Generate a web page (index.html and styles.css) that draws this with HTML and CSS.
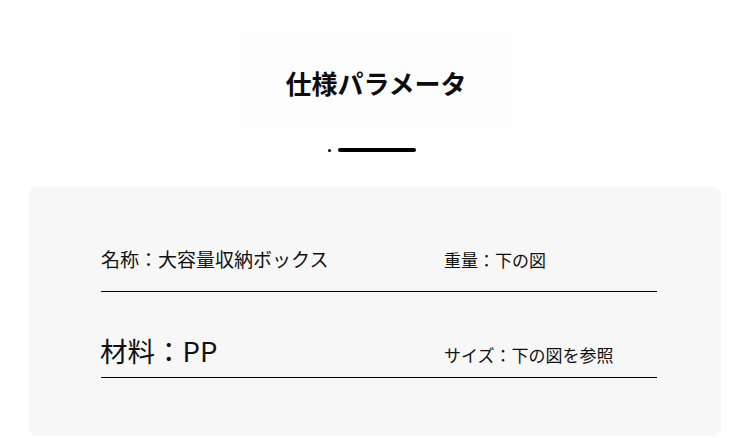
FILE: index.html
```html
<!DOCTYPE html>
<html lang="ja">
<head>
<meta charset="utf-8">
<link rel="stylesheet" href="styles.css">
</head>
<body>
<div class="page">
  <div class="title-box"><h1 class="title">仕様パラメータ</h1></div>
  <div class="divider"><span class="dot"></span><span class="bar"></span></div>
  <div class="card">
    <div class="row row-1">
      <div class="cell cell-left">名称：大容量収納ボックス</div>
      <div class="cell cell-right">重量：下の図</div>
    </div>
    <div class="row row-2">
      <div class="cell cell-left big">材料：PP</div>
      <div class="cell cell-right">サイズ：下の図を参照</div>
    </div>
  </div>
</div>
</body>
</html>
```
FILE: styles.css
```css
html, body {
  margin: 0;
  padding: 0;
  background: #ffffff;
}
body {
  font-family: "Noto Sans CJK JP", "Noto Sans", sans-serif;
  color: #111;
  width: 750px;
  height: 438px;
  overflow: hidden;
}
.page {
  padding-top: 32px;
}
.title-box {
  width: 272px;
  height: 96px;
  box-sizing: border-box;
  padding-top: 6px;
  margin: 0 auto;
  background: #fdfdfd;
  display: flex;
  align-items: center;
  justify-content: center;
  position: relative;
  left: 1px;
}
.title {
  margin: 0;
  font-size: 26px;
  font-weight: 700;
  letter-spacing: 0;
  color: #0d0d0d;
  line-height: 1;
}
.divider {
  display: flex;
  align-items: center;
  justify-content: center;
  gap: 7px;
  margin-top: 20px;
  height: 4px;
  padding-right: 6px;
}
.dot {
  width: 3px;
  height: 3px;
  border-radius: 50%;
  background: #000;
}
.bar {
  width: 78px;
  height: 4px;
  border-radius: 2px;
  background: #000;
}
.card {
  margin: 35px 29px 0;
  height: 249px;
  box-sizing: border-box;
  background: #f7f7f7;
  border-radius: 8px;
  padding: 58px 64px 0 72px;
}
.row {
  display: grid;
  grid-template-columns: 343px 1fr;
  border-bottom: 1px solid #000;
  align-items: baseline;
}
.row-1 {
  padding-bottom: 18px;
}
.row-2 {
  padding-top: 38px;
  padding-bottom: 7px;
}
.cell-left {
  font-size: 19px;
  line-height: 28px;
}
.cell-right {
  font-size: 17px;
  line-height: 24px;
}
.big {
  font-size: 27.5px;
  line-height: 40px;
  margin-left: -1px;
}
```
